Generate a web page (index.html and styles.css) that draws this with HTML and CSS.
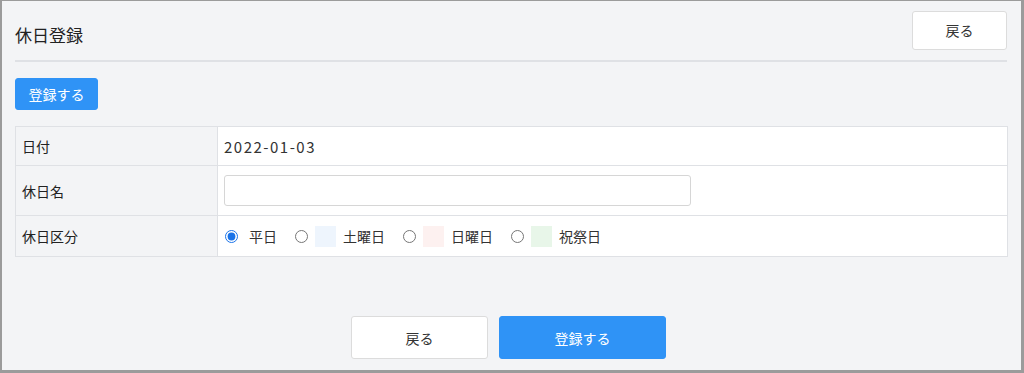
FILE: index.html
```html
<!DOCTYPE html>
<html lang="ja">
<head>
  <meta charset="UTF-8" />
  <title>休日登録</title>
  <link rel="stylesheet" href="styles.css">
</head>
<body>
  <div class="frame">
    <div class="page-header">
      <h1>休日登録</h1>
      <button class="btn btn-white btn-back">戻る</button>
    </div>

    <div class="toolbar">
      <button class="btn btn-blue btn-small">登録する</button>
    </div>

    <table class="form-table">
      <tr class="row-date">
        <th>日付</th>
        <td class="date-value">2022-01-03</td>
      </tr>
      <tr class="row-name">
        <th>休日名</th>
        <td><input type="text" class="text-input" /></td>
      </tr>
      <tr class="row-kind">
        <th>休日区分</th>
        <td>
          <div class="radio-group">
            <label class="radio"><input type="radio" name="kind" checked /><span class="radio-text">平日</span></label>
            <label class="radio"><input type="radio" name="kind" /><span class="swatch swatch-sat"></span><span>土曜日</span></label>
            <label class="radio"><input type="radio" name="kind" /><span class="swatch swatch-sun"></span><span>日曜日</span></label>
            <label class="radio"><input type="radio" name="kind" /><span class="swatch swatch-hol"></span><span>祝祭日</span></label>
          </div>
        </td>
      </tr>
    </table>

    <div class="footer-buttons">
      <button class="btn btn-white btn-large">戻る</button>
      <button class="btn btn-blue btn-large btn-submit">登録する</button>
    </div>
  </div>
</body>
</html>
```

FILE: styles.css
```css
* {
  box-sizing: border-box;
}

body {
  margin: 0;
  font-family: "Noto Sans CJK JP", "Noto Sans", sans-serif;
  font-size: 14px;
  color: #333;
}

.frame {
  width: 1024px;
  height: 373px;
  background-color: #f3f4f6;
  border: 2px solid #9b9b9b;
  border-top-width: 1px;
  border-right-width: 3px;
  border-bottom-width: 3px;
  padding: 0 14px 0 13px;
}

.page-header {
  display: flex;
  justify-content: space-between;
  align-items: center;
  height: 61px;
  padding-top: 8px;
  padding-bottom: 10px;
  border-bottom: 2px solid #dfe1e5;
}

.page-header h1 {
  margin: 0;
  padding-top: 9px;
  font-size: 17px;
  font-weight: normal;
  color: #222;
}

.btn {
  font-family: inherit;
  font-size: 14px;
  border-radius: 3px;
  cursor: pointer;
}

.btn-white {
  background-color: #fff;
  border: 1px solid #dcdcdc;
  color: #333;
}

.btn-blue {
  background-color: #2f93f6;
  border: 1px solid #2f93f6;
  color: #fff;
}

.btn-back {
  width: 95px;
  height: 39px;
  margin-top: 1px;
}

.toolbar {
  padding-top: 16px;
  padding-bottom: 16px;
}

.btn-small {
  width: 83px;
  height: 32px;
  display: block;
}

.form-table {
  width: 993px;
  border-collapse: collapse;
  background-color: #fff;
}

.form-table th,
.form-table td {
  border: 1px solid #dfe1e5;
  text-align: left;
  font-weight: normal;
  padding: 0 6px;
}

.form-table th {
  width: 202px;
  background-color: #f3f4f6;
  color: #222;
}

.row-date th,
.row-date td {
  height: 39px;
}

.date-value {
  font-size: 15px;
  letter-spacing: 1.5px;
}

.row-name th,
.row-name td {
  height: 50px;
}

.row-kind th,
.row-kind td {
  height: 41px;
}

.text-input {
  width: 467px;
  height: 31px;
  border: 1px solid #d6d6d6;
  border-radius: 3px;
  font-family: inherit;
  font-size: 14px;
}

.radio-group {
  display: flex;
  align-items: center;
}

.radio {
  display: flex;
  align-items: center;
  margin-right: 17px;
}

.radio input {
  margin: 0 7px 0 1px;
  width: 13px;
  height: 13px;
  accent-color: #1a73e8;
}

.radio-text {
  margin-left: 4px;
}

.swatch {
  display: inline-block;
  width: 21px;
  height: 21px;
  margin-right: 7px;
}

.swatch-sat {
  background-color: #eef5fd;
}

.swatch-sun {
  background-color: #fdf1f0;
}

.swatch-hol {
  background-color: #e8f6e9;
}

.footer-buttons {
  display: flex;
  justify-content: center;
  gap: 11px;
  margin-top: 59px;
  padding-right: 5px;
}

.btn-large {
  width: 137px;
  height: 43px;
}

.btn-submit {
  width: 167px;
}
```
